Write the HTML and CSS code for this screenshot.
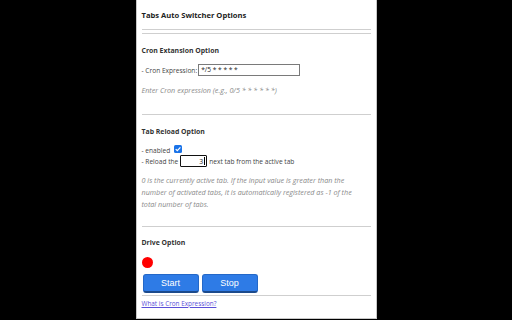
FILE: index.html
```html
<!DOCTYPE html>
<html>
<head>
<meta charset="utf-8">
<link rel="stylesheet" href="styles.css">
</head>
<body>
<div class="panel">
  <h1 class="title">Tabs Auto Switcher Options</h1>
  <hr class="rule rule-a">
  <hr class="rule rule-b">

  <h2 class="heading h-cron">Cron Extansion Option</h2>
  <div class="row cron-row">
    <span>- Cron Expression:</span>
    <span class="text-input cron-input">*/5 * * * * *</span>
  </div>
  <p class="hint hint-cron">Enter Cron expression (e.g., 0/5 * * * * * *)</p>
  <hr class="rule rule-c">

  <h2 class="heading h-reload">Tab Reload Option</h2>
  <div class="row enabled-row">
    <span>- enabled</span>
    <span class="check">
      <svg width="8" height="8" viewBox="0 0 8 8"><rect x="0" y="0" width="8" height="8" rx="1.5" fill="#1a73e8"/><path d="M1.7 4.1 L3.3 5.7 L6.4 2.3" fill="none" stroke="#fff" stroke-width="1.2"/></svg>
    </span>
  </div>
  <div class="row reload-row">
    <span>- Reload the</span>
    <span class="num-input">3<i class="caret"></i></span>
    <span>next tab from the active tab</span>
  </div>
  <p class="hint hint-reload">0 is the currently active tab. If the input value is greater than the number of activated tabs, it is automatically registered as -1 of the total number of tabs.</p>
  <hr class="rule rule-d">

  <h2 class="heading h-drive">Drive Option</h2>
  <div class="dot"></div>
  <div class="buttons">
    <button class="btn">Start</button>
    <button class="btn">Stop</button>
  </div>
  <hr class="rule rule-e">
  <a class="link" href="#">What is Cron Expression?</a>
</div>
</body>
</html>
```

FILE: styles.css
```css
html, body {
  margin: 0;
  padding: 0;
  background: #000;
}
body {
  width: 512px;
  height: 320px;
  overflow: hidden;
  display: flex;
  justify-content: center;
  font-family: "Open Sans", "Noto Sans", sans-serif;
  color: #222;
}
.panel {
  width: 241px;
  height: 319px;
  box-sizing: border-box;
  background: #fff;
  border: 1px solid #c8c8c8;
  border-top: none;
  padding: 0 5px 0 5px;
  display: flex;
  flex-direction: column;
  align-items: flex-start;
}
.title {
  margin: 10px 0 0 0;
  font-size: 7.6px;
  line-height: 10px;
  font-weight: 700;
  color: #222;
}
.rule {
  align-self: stretch;
  border: none;
  height: 1px;
  background: #cfcfcf;
  margin: 0;
}
.rule-a { margin-top: 9px; }
.rule-b { margin-top: 3px; }
.rule-c { margin-top: 19px; }
.rule-d { margin-top: 16px; }
.rule-e { margin-top: 2px; }

.heading {
  margin: 0;
  font-size: 6.9px;
  line-height: 10px;
  font-weight: 700;
  color: #333;
}
.h-cron { margin-top: 12px; }
.h-reload { margin-top: 12px; }
.h-drive { margin-top: 11px; }

.row {
  display: flex;
  align-items: center;
  font-size: 6.6px;
  color: #444;
}
.cron-row { margin-top: 8px; height: 12px; }
.text-input {
  margin-left: 1px;
  width: 102px;
  height: 12px;
  box-sizing: border-box;
  border: 1px solid #7a7a7a;
  padding: 0 2px;
  line-height: 10px;
  font-size: 6.6px;
  color: #222;
}
.hint {
  margin: 0;
  font-style: italic;
  font-size: 7.2px;
  color: #8a8a8a;
}
.hint-cron { margin-top: 9px; line-height: 10px; }
.hint-reload { margin-top: 7px; line-height: 12px; width: 226px; }

.enabled-row { margin-top: 8px; height: 10px; }
.check { margin-left: 4px; display: flex; margin-top: -2px; }
.reload-row { height: 12px; }
.num-input {
  margin: 0 2px 0 2px;
  width: 27px;
  height: 12px;
  box-sizing: border-box;
  border: 1.5px solid #111;
  border-radius: 1px;
  display: flex;
  align-items: center;
  justify-content: flex-end;
  padding-right: 2px;
  font-size: 6.8px;
  color: #222;
}
.caret {
  width: 0.7px;
  height: 8px;
  background: #000;
  margin-left: 0.5px;
}

.dot {
  margin-top: 9px;
  width: 11px;
  height: 11px;
  border-radius: 50%;
  background: #f00;
}
.buttons {
  margin-top: 6px;
  display: flex;
  gap: 3px;
  margin-left: 1px;
}
.btn {
  width: 56px;
  height: 19px;
  box-sizing: border-box;
  border: 1px solid #2468c8;
  border-bottom: 2px solid #1b4a8c;
  border-radius: 3px;
  background: #2e7be6;
  color: #fff;
  font-family: "Liberation Sans", Arial, sans-serif;
  font-size: 9px;
  padding: 0;
  line-height: 15px;
}
.link {
  margin-top: 3px;
  font-size: 6.4px;
  line-height: 10px;
  color: #5a4fd8;
  text-decoration: underline;
}
```
